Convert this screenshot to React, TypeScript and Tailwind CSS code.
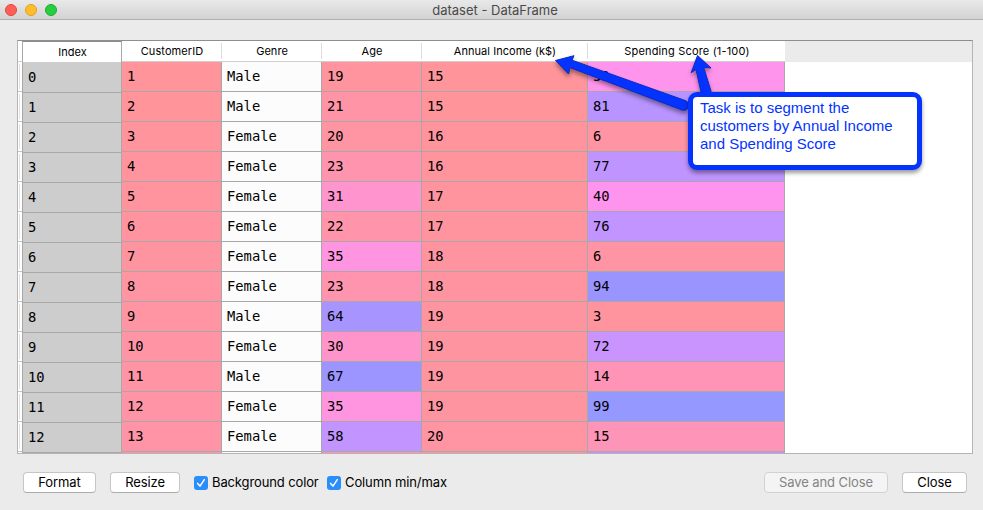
import React from 'react';

type Row = [number, string, number, number, number];

const rows: Row[] = [
  [1, 'Male', 19, 15, 39],
  [2, 'Male', 21, 15, 81],
  [3, 'Female', 20, 16, 6],
  [4, 'Female', 23, 16, 77],
  [5, 'Female', 31, 17, 40],
  [6, 'Female', 22, 17, 76],
  [7, 'Female', 35, 18, 6],
  [8, 'Female', 23, 18, 94],
  [9, 'Male', 64, 19, 3],
  [10, 'Female', 30, 19, 72],
  [11, 'Male', 67, 19, 14],
  [12, 'Female', 35, 19, 99],
  [13, 'Female', 58, 20, 15],
];

// The row below the fold: only its top edge shows, so it carries colours but no labels.
const nextRow: Row = [14, 'Female', 24, 20, 77];

const columns = [
  { name: 'CustomerID', width: 'w-[100px]', tracking: 'tracking-[0.1px]', min: 1, max: 200 },
  { name: 'Genre', width: 'w-[100px]', tracking: 'tracking-[0.05px]', min: 0, max: 0 },
  { name: 'Age', width: 'w-[100px]', tracking: 'tracking-[0.1px]', min: 18, max: 70 },
  { name: 'Annual Income (k$)', width: 'w-[166px]', tracking: 'tracking-[0.04px]', min: 15, max: 137 },
  { name: 'Spending Score (1-100)', width: 'w-[197px]', tracking: 'tracking-[0.17px]', min: 1, max: 99 },
];

// Hue runs from red at the column minimum to blue at its maximum.
function heat(value: number, min: number, max: number) {
  const hue = 0.66 + (0.33 * (max - value)) / (max - min);
  const channel = (n: number) => {
    const k = (n + hue * 6) % 6;
    const c = 1 - 0.7 * Math.max(0, Math.min(k, 4 - k, 1));
    return Math.round(255 * (0.4 + 0.6 * c));
  };
  return `rgb(${channel(5)}, ${channel(3)}, ${channel(1)})`;
}

function DataRow({ row, labels = true }: { row: Row; labels?: boolean }) {
  return (
    <div className="flex h-[30px] shrink-0">
      {columns.map((c, i) => {
        const value = row[i];
        return (
          <div
            key={c.name}
            className={`${c.width} flex shrink-0 items-center border-r border-b border-[#a8a8a8] bg-[#fcfcfc] pl-[5px] font-['DejaVu_Sans_Mono',monospace] text-[13.8px]`}
            style={typeof value === 'number' ? { backgroundColor: heat(value, c.min, c.max) } : undefined}
          >
            {labels && value}
          </div>
        );
      })}
    </div>
  );
}

function Check({ label }: { label: string }) {
  return (
    <label className="flex items-center gap-[4px] text-[13px] tracking-[-0.12px] whitespace-nowrap">
      <span className="flex h-[14px] w-[14px] items-center justify-center rounded-[3px] bg-[#2a8dfc]">
        <svg width="14" height="14" viewBox="0 0 14 14" fill="none" stroke="white" strokeWidth="1.5" strokeLinecap="round" strokeLinejoin="round">
          <path d="M3.6 7.4 L6 10.1 L10.3 3.7" />
        </svg>
      </span>
      {label}
    </label>
  );
}

const button =
  'flex h-[21px] items-center justify-center rounded-[4px] border text-[13px] tracking-[-0.1px] whitespace-nowrap';
const enabled = ' border-[#c6c6c6] border-b-[#ababab] bg-white text-black';

export default function App() {
  return (
    <div className="relative flex h-[510px] w-[983px] flex-col overflow-hidden bg-[#ebebeb] font-['Inter','Noto_Sans',sans-serif] text-black">
      <header className="grid h-[20px] shrink-0 grid-cols-[1fr_auto_1fr] items-center border-b border-[#b1b1b1] bg-linear-to-b from-[#e9e9e9] to-[#d3d3d3]">
        <div className="flex gap-[8px] pl-[5px]">
          <span className="h-[12px] w-[12px] rounded-full border border-[#e2463f] bg-[#ff5f57]" />
          <span className="h-[12px] w-[12px] rounded-full border border-[#dfa023] bg-[#ffbd2e]" />
          <span className="h-[12px] w-[12px] rounded-full border border-[#1dad2b] bg-[#28cd41]" />
        </div>
        <h1 className="pl-[7px] text-[13px] leading-[18px] text-[#4a4a4a]">dataset - DataFrame</h1>
      </header>

      <main className="mt-[20px] ml-[17px] flex h-[414px] w-[956px] shrink-0 overflow-hidden border border-[#b4b4b4] border-t-[#8e8e8e] bg-white">
        <div className="flex w-[4px] shrink-0 flex-col">
          <div className="h-[21px] shrink-0 border-b border-[#d0d0d0]" />
          {rows.map((r) => (
            <div key={r[0]} className="flex h-[30px] shrink-0 border-b border-[#c4c4c4] py-[2px] pl-[1px]">
              <div className="w-px bg-[#e2e2e2]" />
            </div>
          ))}
        </div>
        <div className="flex w-[100px] shrink-0 flex-col border-t border-r border-l border-t-[#8e8e8e] border-r-[#a8a8a8] border-l-[#a8a8a8]">
          <div className="flex h-[20px] shrink-0 items-center justify-center pl-px text-[11px]">Index</div>
          {rows.map((r, i) => (
            <div key={r[0]} className="flex h-[30px] shrink-0 items-center border-b border-[#a8a8a8] bg-[#cdcdcd] pl-[5px] font-['DejaVu_Sans_Mono',monospace] text-[13.8px] first-of-type:h-[20px] nth-2:h-[31px] nth-2:pt-px">
              {i}
            </div>
          ))}
        </div>
        <div className="flex w-[663px] shrink-0 flex-col">
          <div className="flex h-[21px] shrink-0 border-b border-[#d0d0d0]">
            {columns.map((c, i) => (
              <div key={c.name} className={`${c.width} flex shrink-0 items-center py-[2px]`}>
                <span className={`${c.tracking} grow pl-px text-center text-[11px] leading-[17px]`}>{c.name}</span>
                {i < 4 && <span className="h-[16px] w-px bg-[#dcdcdc]" />}
              </div>
            ))}
          </div>
          {rows.map((r) => (
            <DataRow key={r[0]} row={r} />
          ))}
          <DataRow row={nextRow} labels={false} />
        </div>
        <div className="h-[21px] grow bg-[#ebebeb]" />
      </main>

      <footer className="mt-[18px] flex h-[21px] items-center pr-[16px] pl-[23px]">
        <button className={button + enabled + ' w-[73px]'}>Format</button>
        <button className={button + enabled + ' ml-[14px] w-[70px]'}>Resize</button>
        <div className="ml-[14px] flex w-[133px]"><Check label="Background color" /></div>
        <Check label="Column min/max" />
        <button className={button + ' ml-auto w-[124px] border-[#d2d2d2] bg-[#f4f4f4] text-[#848484]'}>Save and Close</button>
        <button className={button + enabled + ' ml-[14px] w-[65px]'}>Close</button>
      </footer>

      <svg className="absolute top-0 left-0 h-[510px] w-[983px] drop-shadow-[0_3px_2px_rgba(0,0,0,0.4)]" viewBox="0 0 983 510" fill="#0433ff" stroke="#0a2ac0" strokeWidth="1" strokeLinejoin="round">
        <path d="M555.5 60.5 L574 55.7 L572 60.2 L686.5 101 Q690 104 688.5 107.5 Q686.5 111 682 110 L569.8 67.5 L568.6 74 Z" />
        <path d="M697.6 55.5 L711 68 L703.7 67.5 L711 91 Q710.5 95 706.3 95 Q702 95.5 701 92 L696 69.5 L691.2 72.7 Z" />
      </svg>
      <aside className="absolute top-[92px] left-[688px] h-[78px] w-[234px] rounded-[9px] border-[5px] border-[#0433ff] bg-white pt-[2px] pl-[7px] font-['Liberation_Sans',Arial,sans-serif] text-[15px] leading-[18px] text-[#0433ff] shadow-[0_3px_4px_rgba(0,0,0,0.4)]">
        Task is to segment the
        <br />
        customers by Annual Income
        <br />
        and Spending Score
      </aside>
    </div>
  );
}
